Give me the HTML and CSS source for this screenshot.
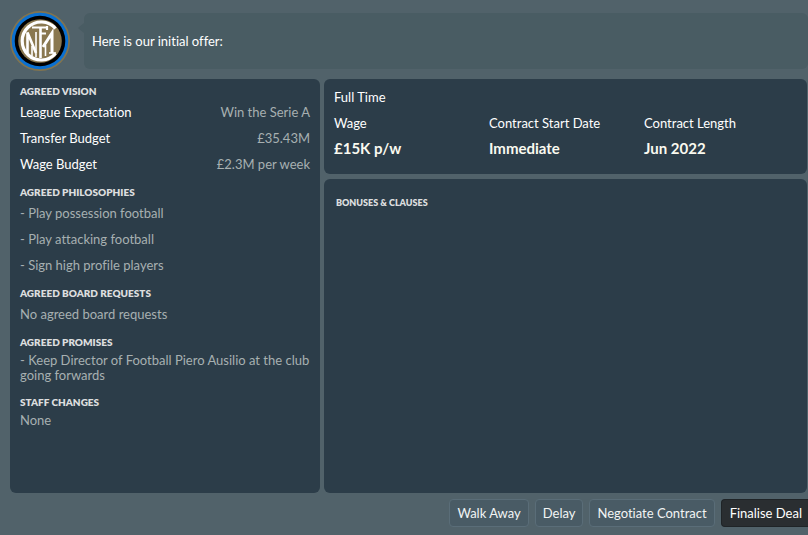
FILE: index.html
```
<!DOCTYPE html>
<html lang="en">
<head>
    <meta charset="UTF-8">
    <meta name="viewport" content="width=device-width, initial-scale=1.0">
    <title>Contract Offer</title>
    <link rel="stylesheet" href="styles.css">
</head>
<body>
    <div class="container">
        <header>
            <svg class="crest" viewBox="0 0 60 60" role="img" aria-label="Club crest">
                <circle cx="30" cy="30" r="30" fill="#81744f"/>
                <circle cx="30" cy="30" r="28.3" fill="#0b70d0"/>
                <circle cx="30" cy="30" r="25.3" fill="#000"/>
                <circle cx="30" cy="30" r="21.8" fill="#8a7850"/>
                <g fill="none" stroke="#fff">
                    <path d="M45.5 17.5A19 19 0 1 0 45.5 42.5" stroke-width="3.2"/>
                    <path d="M17.5 42V21.5L26 42" stroke-width="2.6"/>
                    <path d="M33 36L42 22V42" stroke-width="3"/>
                    <path d="M22 45V35M26 46V21M35.5 45V34" stroke-width="1.6"/>
                    <path d="M30.5 47V16" stroke-width="2.6"/>
                    <path d="M22 16.5H37M37 15V19M30 22.5H36" stroke-width="2.2"/>
                    <path d="M39 42H46" stroke-width="1.6"/>
                </g>
            </svg>
            <div class="message">
                <p>Here is our initial offer:</p>
            </div>
        </header>

        <main>
            <div class="panel agreed">
                <section>
                    <h2>AGREED VISION</h2>
                    <dl>
                        <div class="row"><dt>League Expectation</dt><dd>Win the Serie A</dd></div>
                        <div class="row"><dt>Transfer Budget</dt><dd>£35.43M</dd></div>
                        <div class="row"><dt>Wage Budget</dt><dd>£2.3M per week</dd></div>
                    </dl>
                </section>
                <section>
                    <h2>AGREED PHILOSOPHIES</h2>
                    <ul>
                        <li class="row">- Play possession football</li>
                        <li class="row">- Play attacking football</li>
                        <li class="row">- Sign high profile players</li>
                    </ul>
                </section>
                <section>
                    <h2>AGREED BOARD REQUESTS</h2>
                    <p class="row">No agreed board requests</p>
                </section>
                <section>
                    <h2>AGREED PROMISES</h2>
                    <p class="note">- Keep Director of Football Piero Ausilio at the club going forwards</p>
                </section>
                <section>
                    <h2>STAFF CHANGES</h2>
                    <p class="note">None</p>
                </section>
            </div>

            <div class="offer">
                <div class="panel contract">
                    <p class="row">Full Time</p>
                    <dl class="terms">
                        <div><dt>Wage</dt><dd>£15K p/w</dd></div>
                        <div><dt>Contract Start Date</dt><dd>Immediate</dd></div>
                        <div><dt>Contract Length</dt><dd>Jun 2022</dd></div>
                    </dl>
                </div>
                <div class="panel clauses">
                    <h2>BONUSES &amp; CLAUSES</h2>
                </div>
            </div>
        </main>

        <footer>
            <button type="button">Walk Away</button>
            <button type="button">Delay</button>
            <button type="button">Negotiate Contract</button>
            <button type="button" class="finalise">Finalise Deal</button>
        </footer>
    </div>
</body>
</html>
```
FILE: styles.css
```
*{
    margin: 0;
    padding: 0;
    box-sizing: border-box;
}
body{
    background-color: #51626a;
    color: #fff;
    font-family: Lato, "Liberation Sans", sans-serif;
    font-size: 13px;
    font-variant-ligatures: none;
    line-height: 15px;
}
.container{
    display: flex;
    flex-direction: column;
    min-height: 100vh;
    padding: 11px 0 8px 10px;
    overflow: hidden;
}
header{
    display: flex;
    align-items: center;
    gap: 14px;
    margin-bottom: 8px;
}
.crest{
    width: 60px;
    height: 60px;
    flex: none;
}
.message{
    position: relative;
    flex: 1;
    display: flex;
    align-items: center;
    min-height: 56px;
    padding: 0 8px;
    border-radius: 6px;
    background-color: #495c63;
}
/* pointer of the speech bubble */
.message::before{
    content: "";
    position: absolute;
    left: -6px;
    top: 10px;
    border-top: 5px solid transparent;
    border-bottom: 5px solid transparent;
    border-right: 6px solid #495c63;
}

main{
    flex: 1;
    display: grid;
    grid-template-columns: 310fr 483fr;
    gap: 4px;
    padding-right: 1px;
}
.panel{
    border-radius: 6px;
    background-color: #2c3d49;
}
h2{
    color: #dcdedf;
    font-size: 10px;
    font-weight: 800;
    line-height: 16px;
}
ul{
    list-style: none;
}
.row{
    display: flex;
    align-items: center;
    justify-content: space-between;
    min-height: 26px;
}

/* left panel */
.agreed{
    display: flex;
    flex-direction: column;
    gap: 7px;
    padding: 4px 10px;
    color: #a7b0b1;
}
.agreed dt{
    color: #fff;
}
.note{
    padding: 3px 0 4px;
}

/* right panels */
.offer{
    display: flex;
    flex-direction: column;
    gap: 5px;
}
.contract{
    padding: 5px 8px 12px 10px;
}
.terms{
    display: grid;
    grid-template-columns: repeat(3, 1fr);
    line-height: 26px;
}
.terms dd{
    color: #fafaf0;
    font-size: 15px;
    font-weight: 700;
    line-height: 24px;
}
.terms div{
    padding-bottom: 2px;
}
.clauses{
    flex: 1;
    padding: 16px 12px;
}
.clauses h2{
    font-size: 9px;
}

footer{
    display: flex;
    justify-content: flex-end;
    gap: 6px;
    margin-top: 6px;
}
button{
    height: 28px;
    padding: 0 7px;
    border: 1px solid #5a6d78;
    border-radius: 4px;
    background-color: #495b65;
    color: #f2f4f4;
    font: inherit;
    cursor: pointer;
}
.finalise{
    padding: 0 6px 0 8px;
    border-color: #1f2427;
    border-right: none;
    border-radius: 4px 0 0 4px;
    background-color: #2a2e31;
    color: #fff;
}
```
